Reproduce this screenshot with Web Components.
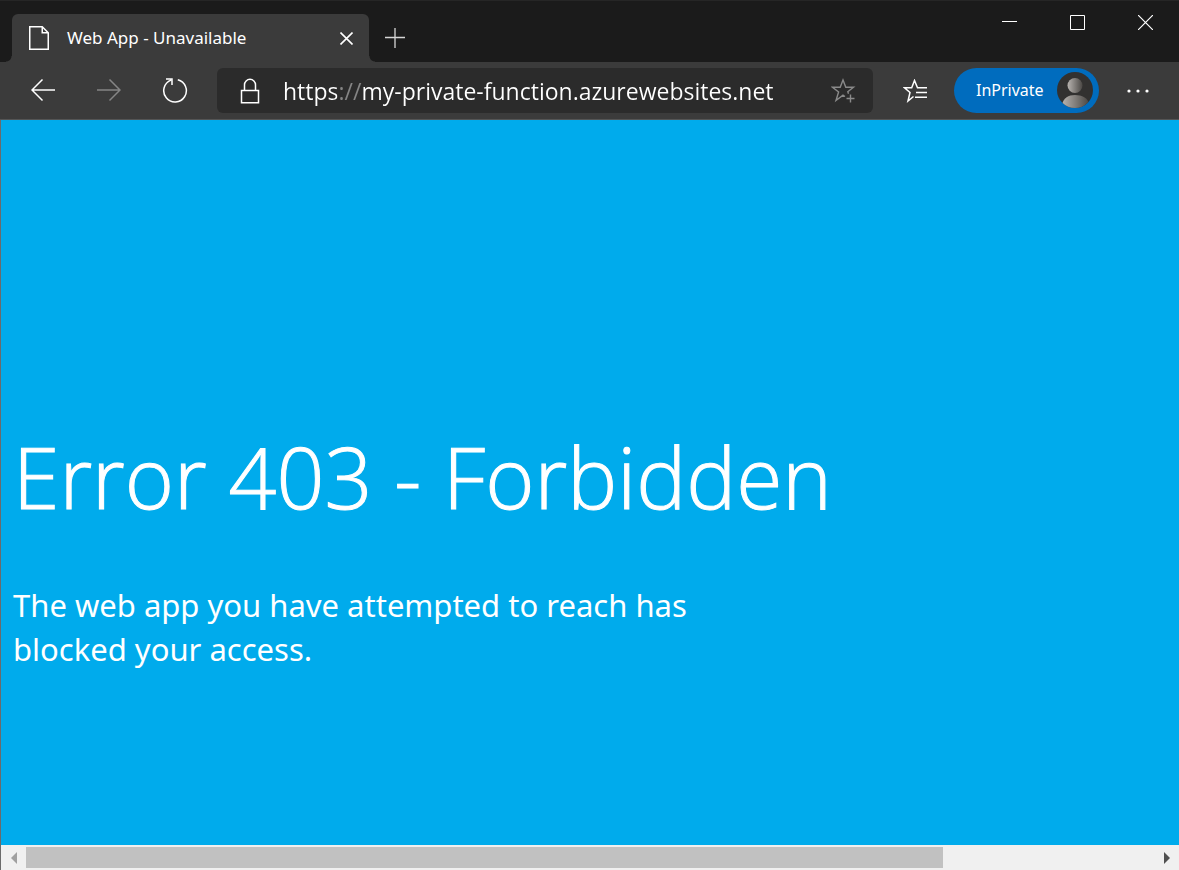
<!DOCTYPE html>
<html lang="en">
<head>
<meta charset="utf-8">
<meta name="viewport" content="width=device-width, initial-scale=1">
<title>Web App - Unavailable</title>
<style>
  html, body { margin: 0; }
  body { font-family: "Noto Sans", "Open Sans", sans-serif; color: #fff; background: #1b1b1b; }
</style>
</head>
<body>
<browser-window>
  <title-bar slot="chrome"><browser-tab>Web App - Unavailable</browser-tab></title-bar>
  <tool-bar slot="chrome">
    <address-field url="https://my-private-function.azurewebsites.net"></address-field>
    <profile-pill slot="end">InPrivate</profile-pill>
  </tool-bar>
  <error-page>
    <span slot="heading">Error 403 - Forbidden</span>
    The web app you have attempted to reach has blocked your access.
  </error-page>
  <scroll-strip slot="footer"></scroll-strip>
</browser-window>

<script>
const BUTTON = `
  button { display: grid; place-items: center; padding: 0; border: 0; background: none; color: inherit; font: inherit; }
  svg { display: block; fill: none; stroke: currentColor; }
`;

function define(name, html, setup) {
  const template = document.createElement("template");
  template.innerHTML = html;
  customElements.define(name, class extends HTMLElement {
    constructor() {
      super();
      this.attachShadow({ mode: "open" }).append(template.content.cloneNode(true));
    }
    connectedCallback() { if (setup) setup(this); }
  });
}

define("browser-window", `
  <style>
    :host { display: flex; flex-direction: column; min-height: 100vh; }
    main { flex: 1; display: grid; border-left: 1px solid #6b6b6b; }
  </style>
  <slot name="chrome"></slot>
  <main><slot></slot></main>
  <slot name="footer"></slot>
`);

define("title-bar", `
  <style>${BUTTON}
    :host { display: flex; align-items: flex-end; height: 62px; padding-left: 12px; box-sizing: border-box;
            background: #1b1b1b; border-top: 1px solid #262626; }
    .new { width: 52px; height: 48px; }
    .window { display: flex; align-self: flex-start; margin-left: auto; }
    .window button { width: 68px; height: 43px; }
    .new svg { stroke: #d6d6d6; }
  </style>
  <slot></slot>
  <button class="new" aria-label="New tab"><svg width="20" height="20" viewBox="0 0 20 20"><path d="M10 0v20M0 9.500h20" stroke-width="1.3"/></svg></button>
  <div class="window">
    <button aria-label="Minimize"><svg width="15" height="15" viewBox="0 0 15 15"><path d="M0 6.500h15"/></svg></button>
    <button aria-label="Maximize"><svg width="15" height="15" viewBox="0 0 15 15"><path d="M.5.5h14v14H.5z"/></svg></button>
    <button aria-label="Close"><svg width="15" height="15" viewBox="0 0 15 15"><path d="M0 0l15 15M15 0L0 15" stroke-width="1.2"/></svg></button>
  </div>
`);

define("browser-tab", `
  <style>${BUTTON}
    :host { position: relative; display: flex; align-items: center; gap: 18px; flex: 0 1 357px; height: 48px; padding: 0 12px 0 17px;
            box-sizing: border-box; border-radius: 6px 6px 0 0; background: #3b3b3b; font-size: 17px; line-height: 24px; white-space: nowrap; }
    :host::before, :host::after { content: ""; position: absolute; bottom: 0; width: 6px; height: 6px; }
    :host::before { right: 100%; background: radial-gradient(circle at 0 0, transparent 5px, #3b3b3b 6px); }
    :host::after { left: 100%; background: radial-gradient(circle at 100% 0, transparent 5px, #3b3b3b 6px); }
    .label { flex: 1; }
    button { width: 22px; height: 22px; }
  </style>
  <svg width="20" height="24" viewBox="0 0 20 24" stroke-width="1.5" aria-hidden="true"><path d="M.75.75h12.500l6 6v16.500H.75zM13.250.75v6h6"/></svg>
  <span class="label"><slot></slot></span>
  <button aria-label="Close tab"><svg width="13" height="13" viewBox="0 0 13 13" stroke-width="1.6"><path d="M.5.5l12 12M12.500.5l-12 12"/></svg></button>
`);

define("tool-bar", `
  <style>${BUTTON}
    :host { display: flex; align-items: center; height: 58px; padding: 0 8px 0 10px; box-sizing: border-box;
            background: #3b3b3b; border-bottom: 1px solid #555; }
    button { flex: none; width: 66px; height: 45px; }
    .fav { width: 81px; padding-left: 4px; }
    .more { width: 64px; margin-left: 8px; }
    .dim { color: #858585; }
  </style>
  <button aria-label="Back"><svg width="24" height="24" viewBox="0 0 24 24" stroke-width="1.5"><path d="M24 11H1M11.500.5L1 11l10.500 10.500"/></svg></button>
  <button class="dim" aria-label="Forward" disabled><svg width="24" height="24" viewBox="0 0 24 24" stroke-width="1.5"><path d="M0 11h23M12.500.5L23 11 12.500 21.500"/></svg></button>
  <button aria-label="Refresh"><svg width="26" height="26" viewBox="0 0 26 26" stroke-width="1.500"><path d="M15.800 1.700A11.300 11.300 0 1 1 9 2.100M4 1h6v6"/></svg></button>
  <slot></slot>
  <button class="fav" aria-label="Favorites"><svg width="26" height="24" viewBox="0 0 26 24" stroke-width="1.500"><path d="M10.500 17.500l-5.500 4.500 2-8.500L1.500 8.800h7.200L11.500 1.500l3 7.300H24M13 13.500h11M12 18.200h12"/></svg></button>
  <slot name="end"></slot>
  <button class="more" aria-label="Settings and more"><svg width="24" height="4" viewBox="0 0 24 4"><g fill="currentColor" stroke="none"><circle cx="2" cy="2" r="1.600"/><circle cx="11" cy="2" r="1.600"/><circle cx="20" cy="2" r="1.600"/></g></svg></button>
`);

define("address-field", `
  <style>${BUTTON}
    :host { flex: 1; display: flex; align-items: center; min-width: 0; height: 45px; margin-left: 9px; border-radius: 6px; background: #2b2b2b; }
    button { flex: none; width: 66px; height: 45px; }
    .star { width: 60px; padding-left: 2px; color: #8a8a8a; }
    /* The scheme separator is dimmed by painting the glyphs with a stepped background. */
    input { flex: 1; min-width: 0; height: 44px; padding: 0; border: 0; outline: 0; font: 23px/32px "Open Sans", "Noto Sans", sans-serif;
            color: transparent; caret-color: #fff;
            background: linear-gradient(90deg, #fff 54px, #858585 54px 78px, #fff 78px); -webkit-background-clip: text; background-clip: text; }
  </style>
  <button aria-label="View site information"><svg width="20" height="26" viewBox="0 0 20 26" stroke-width="1.500"><path d="M1.500 12.500h17v12.200h-17zM4.500 12.500V6.800a5.500 5.500 0 0 1 11 0v5.700"/></svg></button>
  <input type="text" aria-label="Address" spellcheck="false">
  <button class="star" aria-label="Add to favorites"><svg width="26" height="26" viewBox="0 0 26 26" stroke-width="1.400"><path d="M14 18.500l-2-1.300L5 22.500l2.600-8.500L1.500 9.300h7.700L12 2l2.800 7.300h7.700l-5.700 4.500.7 2M19.500 16.500v8M15.500 20.500h8"/></svg></button>
`, host => { host.shadowRoot.querySelector("input").value = host.getAttribute("url"); });

define("profile-pill", `
  <style>${BUTTON}
    :host { display: block; flex: none; }
    button { display: flex; align-items: center; justify-content: space-between; width: 145px; height: 45px; padding: 0 6px 2px 22px;
             border-radius: 23px; background: #006cbe; font-size: 16px; line-height: 24px; }
    svg { stroke: none; }
  </style>
  <button>
    <slot></slot>
    <svg width="36" height="36" viewBox="0 0 36 36" aria-hidden="true">
      <defs><linearGradient id="g"><stop offset="0" stop-color="#b8b4b0"/><stop offset="1" stop-color="#4a4744"/></linearGradient>
      <clipPath id="c"><circle cx="18" cy="18" r="18"/></clipPath></defs>
      <circle cx="18" cy="18" r="18" fill="#323130"/>
      <circle cx="18" cy="13.500" r="7.500" fill="url(#g)"/>
      <path clip-path="url(#c)" fill="url(#g)" d="M5 32c2-6 6-9 13-9s13 3 14 9v4H5z"/>
    </svg>
  </button>
`);

define("error-page", `
  <style>
    :host { display: block; padding: 297px 12px 0; background: #00abec; }
    h1 { margin: 0 0 46px; font: 300 84px/120px "Open Sans", "Noto Sans", sans-serif; -webkit-text-stroke: 1px currentColor; }
    p { max-width: 700px; margin: 0; font-size: 31px; line-height: 44px; }
  </style>
  <h1><slot name="heading"></slot></h1>
  <p><slot></slot></p>
`);

define("scroll-strip", `
  <style>${BUTTON}
    :host { display: flex; align-items: center; height: 25px; background: #f0f0f0; border-left: 1px solid #6b6b6b; }
    button { width: 25px; height: 25px; color: #a0a0a0; }
    .end { color: #505050; }
    svg { fill: currentColor; stroke: none; }
    .track { flex: 1; height: 21px; }
    .thumb { width: 81.300%; height: 100%; background: #c1c1c1; }
  </style>
  <button aria-label="Scroll left"><svg width="6" height="12" viewBox="0 0 6 12"><path d="M6 0v12L0 6z"/></svg></button>
  <div class="track"><div class="thumb"></div></div>
  <button class="end" aria-label="Scroll right"><svg width="6" height="12" viewBox="0 0 6 12"><path d="M0 0v12l6-6z"/></svg></button>
`);
</script>
</body>
</html>
